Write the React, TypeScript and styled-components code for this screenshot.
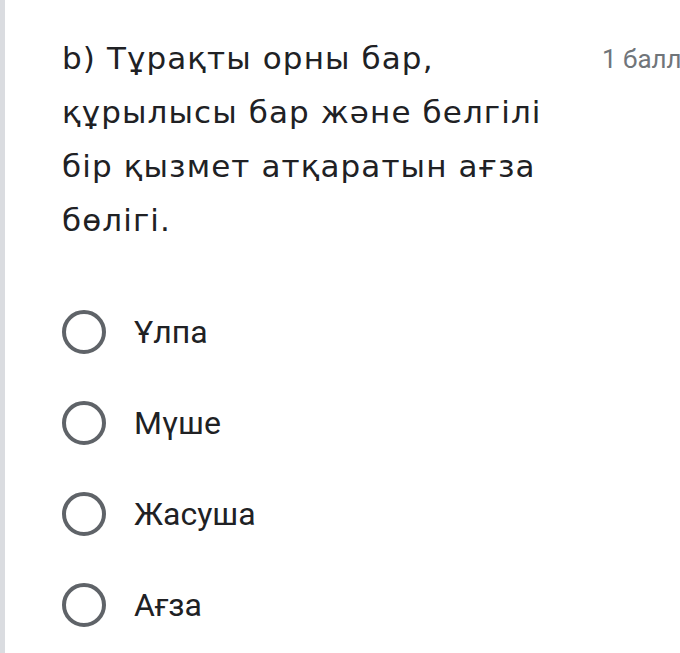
import React from "react";
import styled, { createGlobalStyle } from "styled-components";

const Global = createGlobalStyle`
  html, body { margin: 0; padding: 0; background: #ffffff; }
  body { overflow: hidden; }
`;

const Card = styled.div`
  width: 680px;
  height: 653px;
  box-sizing: border-box;
  border-left: 5px solid #dadce0;
  background: #ffffff;
  padding: 31px 0 0 57px;
  overflow: hidden;
`;

const Header = styled.div`
  display: grid;
  grid-template-columns: 540px auto;
  align-items: start;
`;

const Title = styled.div`
  font-family: "DejaVu Sans", "Open Sans", sans-serif;
  font-size: 31px;
  letter-spacing: 1.1px;
  line-height: 54px;
  color: #202124;
  white-space: nowrap;
`;

const Points = styled.div`
  font-family: Roboto, "Liberation Sans", sans-serif;
  font-size: 26px;
  line-height: 54px;
  padding-top: 1px;
  color: #70757a;
  white-space: nowrap;
`;

const Options = styled.div`
  display: flex;
  flex-direction: column;
  margin-top: 39px;
`;

const Option = styled.label`
  display: flex;
  align-items: center;
  height: 91px;
  gap: 28px;
`;

const Radio = styled.span`
  width: 44px;
  height: 44px;
  box-sizing: border-box;
  border: 4px solid #5f6368;
  border-radius: 50%;
  flex: none;
`;

const OptionText = styled.span`
  font-family: Roboto, "Liberation Sans", sans-serif;
  font-size: 32px;
  color: #202124;
`;

const options = ["Ұлпа", "Мүше", "Жасуша", "Ағза"];

export default function App() {
  return (
    <>
      <Global />
      <Card>
        <Header>
          <Title>
            b) Тұрақты орны бар,
            <br />
            құрылысы бар және белгілі
            <br />
            бір қызмет атқаратын ағза
            <br />
            бөлігі.
          </Title>
          <Points>1 балл</Points>
        </Header>
        <Options>
          {options.map((o) => (
            <Option key={o}>
              <Radio />
              <OptionText>{o}</OptionText>
            </Option>
          ))}
        </Options>
      </Card>
    </>
  );
}
